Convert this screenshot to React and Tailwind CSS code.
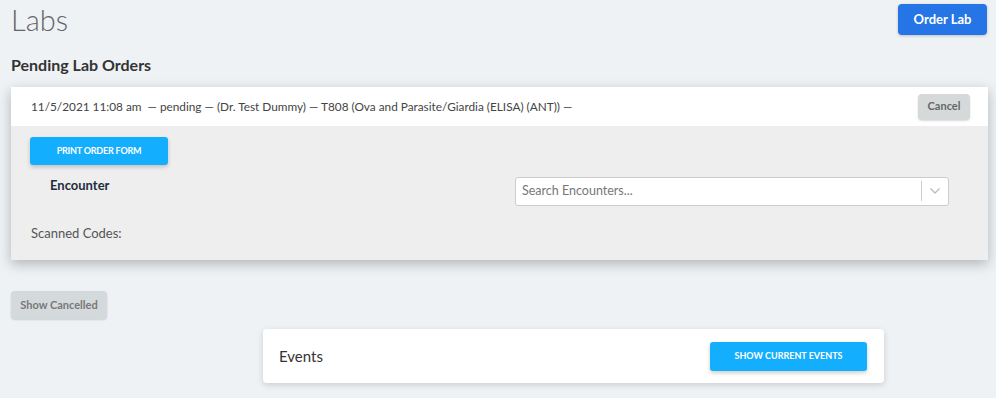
import React from "react";

export default function App() {
  const font = { fontFamily: '"Source Sans Pro", Lato, "Noto Sans", sans-serif' };
  return (
    <div className="w-[996px] h-[398px] bg-[#eef2f5] overflow-hidden text-[#333]" style={font}>
      <div className="flex items-start justify-between pl-[11px] pr-[9px] pt-[4px]">
        <h1 className="text-[29px] font-light leading-[34px] text-[#666] mt-[-1px]">Labs</h1>
        <button className="w-[89px] h-[31px] rounded-[4px] bg-[#2575e6] text-white text-[13px] font-bold shadow-[0_1px_3px_rgba(0,0,0,0.2)]">
          Order Lab
        </button>
      </div>
      <h2 className="ml-[11px] mt-[18px] text-[16px] font-bold leading-[20px] text-[#333]">Pending Lab Orders</h2>
      <div className="ml-[11px] mr-[8px] mt-[12px] shadow-[0_4px_12px_rgba(0,0,0,0.25)]">
        <div className="h-[39px] bg-white flex items-center justify-between pl-[20px] pr-[18px]">
          <span className="text-[11.8px] text-[#444]">
            11/5/2021 11:08 am&nbsp; — pending — (Dr. Test Dummy) — T808 (Ova and Parasite/Giardia (ELISA) (ANT)) —
          </span>
          <button className="w-[52px] h-[26px] rounded-[4px] bg-[#d5d9da] text-[#666] text-[11px] font-bold shadow-[0_1px_2px_rgba(0,0,0,0.15)]">
            Cancel
          </button>
        </div>
        <div className="h-[134px] bg-[#eeeeee] pl-[19px] pt-[10px] pr-[39px]">
          <button className="w-[138px] h-[28px] rounded-[3px] bg-[#13aefe] text-white text-[9px] font-bold tracking-[-0.2px] shadow-[0_2px_4px_rgba(0,0,0,0.2)]">
            PRINT ORDER FORM
          </button>
          <div className="flex items-start justify-between mt-[12px]">
            <div className="pl-[20px] text-[13px] font-bold text-[#1f2d3d] leading-[16px]">Encounter</div>
            <div className="w-[434px] h-[29px] bg-white border border-[#cccccc] rounded-[3px] flex items-center">
              <span className="flex-1 pl-[6px] text-[12.5px] text-[#777]">Search Encounters...</span>
              <div className="w-px h-[20px] bg-[#cccccc]" />
              <div className="w-[26px] flex justify-center">
                <svg width="12" height="8" viewBox="0 0 12 8" fill="none">
                  <path d="M1.5 1.5 L6 6 L10.5 1.5" stroke="#bbbbbb" strokeWidth="1.3" />
                </svg>
              </div>
            </div>
          </div>
          <div className="mt-[18px] text-[13px] text-[#555] pl-[1px]">Scanned Codes:</div>
        </div>
      </div>
      <button className="ml-[11px] mt-[31px] w-[96px] h-[28px] rounded-[4px] bg-[#d4d9dc] text-[#777] text-[11px] font-bold shadow-[0_1px_2px_rgba(0,0,0,0.15)]">
        Show Cancelled
      </button>
      <div className="ml-[263px] mt-[10px] w-[621px] h-[54px] bg-white rounded-[4px] shadow-[0_2px_6px_rgba(0,0,0,0.15)] flex items-center justify-between pl-[16px] pr-[17px]">
        <span className="text-[15px] text-[#333]">Events</span>
        <button className="w-[157px] h-[29px] rounded-[3px] bg-[#13aefe] text-white text-[9px] font-bold shadow-[0_2px_4px_rgba(0,0,0,0.2)]">
          SHOW CURRENT EVENTS
        </button>
      </div>
    </div>
  );
}
